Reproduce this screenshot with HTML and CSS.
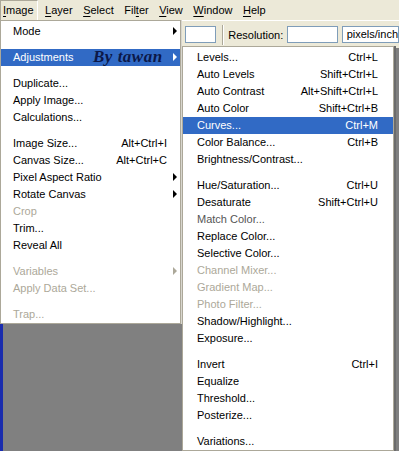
FILE: index.html
```html
<!DOCTYPE html>
<html lang="en">
<head>
    <meta charset="UTF-8">
    <meta name="viewport" content="width=device-width, initial-scale=1.0">
    <title>Image menu</title>
    <link rel="stylesheet" href="styles.css">
</head>
<body>
    <div class="menubar">
        <span class="open"><u>I</u>mage</span>
        <span><u>L</u>ayer</span>
        <span><u>S</u>elect</span>
        <span>Fil<u>t</u>er</span>
        <span><u>V</u>iew</span>
        <span><u>W</u>indow</span>
        <span><u>H</u>elp</span>
    </div>
    <div class="options">
        <span class="field small"></span>
        <span class="divider"></span>
        <span class="label">Resolution:</span>
        <span class="field res"></span>
        <span class="field units">pixels/inch</span>
    </div>
    <div class="workspace"></div>

    <ul class="menu image-menu">
        <li class="sub"><span>Mode</span></li>
        <li class="sep"></li>
        <li class="sub active"><span>Adjustments</span><em class="sign">By tawan</em></li>
        <li class="sep"></li>
        <li><span>Duplicate...</span></li>
        <li><span>Apply Image...</span></li>
        <li><span>Calculations...</span></li>
        <li class="sep"></li>
        <li><span>Image Size...</span><kbd>Alt+Ctrl+I</kbd></li>
        <li><span>Canvas Size...</span><kbd>Alt+Ctrl+C</kbd></li>
        <li class="sub"><span>Pixel Aspect Ratio</span></li>
        <li class="sub"><span>Rotate Canvas</span></li>
        <li class="off"><span>Crop</span></li>
        <li><span>Trim...</span></li>
        <li><span>Reveal All</span></li>
        <li class="sep"></li>
        <li class="sub off"><span>Variables</span></li>
        <li class="off"><span>Apply Data Set...</span></li>
        <li class="sep"></li>
        <li class="off"><span>Trap...</span></li>
    </ul>

    <ul class="menu adjust-menu">
        <li><span>Levels...</span><kbd>Ctrl+L</kbd></li>
        <li><span>Auto Levels</span><kbd>Shift+Ctrl+L</kbd></li>
        <li><span>Auto Contrast</span><kbd>Alt+Shift+Ctrl+L</kbd></li>
        <li><span>Auto Color</span><kbd>Shift+Ctrl+B</kbd></li>
        <li class="active"><span>Curves...</span><kbd>Ctrl+M</kbd></li>
        <li><span>Color Balance...</span><kbd>Ctrl+B</kbd></li>
        <li><span>Brightness/Contrast...</span></li>
        <li class="sep"></li>
        <li><span>Hue/Saturation...</span><kbd>Ctrl+U</kbd></li>
        <li><span>Desaturate</span><kbd>Shift+Ctrl+U</kbd></li>
        <li class="dim"><span>Match Color...</span></li>
        <li><span>Replace Color...</span></li>
        <li><span>Selective Color...</span></li>
        <li class="off"><span>Channel Mixer...</span></li>
        <li class="off"><span>Gradient Map...</span></li>
        <li class="off"><span>Photo Filter...</span></li>
        <li><span>Shadow/Highlight...</span></li>
        <li><span>Exposure...</span></li>
        <li class="sep"></li>
        <li><span>Invert</span><kbd>Ctrl+I</kbd></li>
        <li><span>Equalize</span></li>
        <li><span>Threshold...</span></li>
        <li><span>Posterize...</span></li>
        <li class="sep"></li>
        <li><span>Variations...</span></li>
    </ul>
</body>
</html>
```

FILE: styles.css
```css
*{
    margin: 0;
    padding: 0;
    box-sizing: border-box;
}
html, body{
    width: 399px;
    height: 451px;
    overflow: hidden;
}
body{
    position: relative;
    font-family: "Liberation Sans", Arial, sans-serif;
    font-size: 11px;
    color: #000;
    background-color: #808080;
}

/* menu bar */
.menubar{
    display: flex;
    gap: 10.5px;
    height: 20px;
    padding-left: 2px;
    line-height: 20px;
    background-color: #ece9d8;
}
.menubar u{
    text-decoration-thickness: 1px;
    text-underline-offset: 2px;
}
.menubar .open{
    margin-left: -2px;
    margin-right: -3px;
    padding: 0 3px 0 2px;
    border-top: 1px solid #aca899;
    border-left: 1px solid #aca899;
    border-right: 1px solid #fff;
    line-height: 19px;
}

/* options bar behind the menus */
.options{
    display: flex;
    align-items: center;
    height: 28px;
    padding-left: 185px;
    background-color: #ece9d8;
    border-top: 1px solid #fff;
}
.field{
    height: 17px;
    background-color: #fff;
    border: 1px solid #7f9db9;
}
.small{
    width: 34px;
}
.divider{
    width: 2px;
    height: 20px;
    margin-left: 6px;
    border-left: 1px solid #aca899;
    border-right: 1px solid #fff;
}
.label{
    margin-left: 4px;
}
.res{
    width: 55px;
    margin-left: 4px;
}
.units{
    width: 62px;
    margin-left: 4px;
    padding-left: 4px;
    line-height: 15px;
}
.workspace{
    height: 403px;
    border-left: 3px solid #1a2cae;
    background-color: #808080;
}

/* popup menus */
.menu{
    position: absolute;
    list-style: none;
    background-color: #fff;
    border: 1px solid #aca899;
    padding-top: 2px;
}
.image-menu{
    top: 20px;
    left: 0;
    width: 181px;
    box-shadow: 1px 0 0 #d8d6ce;
}
.adjust-menu{
    top: 46px;
    left: 182px;
    width: 212px;
    box-shadow: 2px 0 0 #6c6c6c;
}
.menu li{
    position: relative;
    display: flex;
    justify-content: space-between;
    height: 17px;
    line-height: 17px;
    white-space: nowrap;
}
.image-menu li{
    padding: 0 13px 0 12px;
}
.adjust-menu li{
    padding: 0 15px 0 14px;
}
.menu kbd{
    font-family: inherit;
    font-size: inherit;
}
.menu li.sep{
    height: 9px;
    padding: 0;
}
.menu li.sep::before{
    content: "";
    display: block;
    margin-top: 3px;
    border-top: 1px solid #aca899;
}
.menu li.active{
    color: #fff;
    background-color: #316ac5;
}
.menu li.off{
    color: #aca899;
}
.menu li.dim{
    color: #555;
}
.menu li.sub::after{
    content: "";
    position: absolute;
    right: 3px;
    top: 4px;
    border-top: 4px solid transparent;
    border-bottom: 4px solid transparent;
    border-left: 4px solid currentColor;
}
.image-menu li.active.sub::after{
    border-left-color: #fff;
}
.sign{
    position: absolute;
    left: 92px;
    top: -1px;
    font-family: "Liberation Serif", "Times New Roman", serif;
    font-size: 17px;
    font-weight: bold;
    font-style: italic;
    letter-spacing: 0.5px;
    color: #0c1848;
}
```
